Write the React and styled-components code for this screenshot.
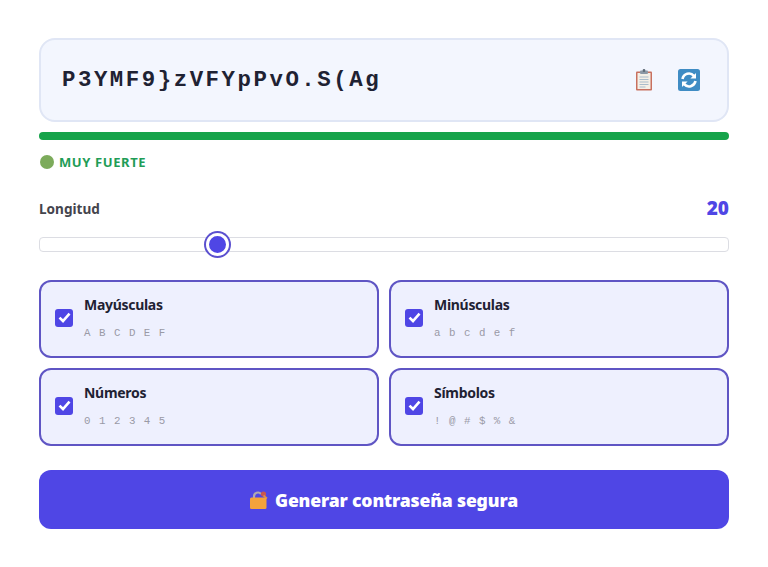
import React from "react"
import styled, { createGlobalStyle } from "styled-components"

const Global = createGlobalStyle`
  html, body { margin: 0; padding: 0; background: #fff; }
  * { box-sizing: border-box; }
  body { font-family: "Noto Sans", "Open Sans", sans-serif; }
`

const Page = styled.main`
  width: 768px;
  height: 567px;
  padding: 38px 39px 0;
  display: flex;
  flex-direction: column;
`

const PasswordBox = styled.div`
  height: 84px;
  background: #f3f6fe;
  border: 2px solid #e0e6f5;
  border-radius: 16px;
  padding: 0 27px 0 21px;
  display: flex;
  align-items: center;
  justify-content: space-between;
`

const PasswordText = styled.span`
  font-family: "Liberation Mono", monospace;
  font-size: 22.4px;
  font-weight: 700;
  letter-spacing: 2.52px;
  color: #1f2233;
`

const IconRow = styled.div`
  display: flex;
  align-items: center;
  gap: 24px;
`

const StrengthBar = styled.div`
  height: 8px;
  margin-top: 10px;
  border-radius: 4px;
  background: #16a34a;
`

const StrengthLabel = styled.div`
  display: flex;
  align-items: center;
  gap: 5px;
  margin: 13px 0 0 1px;
  height: 18px;
  font-size: 13px;
  font-weight: 700;
  letter-spacing: 0.6px;
  color: #1f9d57;
`

const Dot = styled.span`
  width: 14px;
  height: 14px;
  border-radius: 50%;
  background: #7cab5b;
`

const LengthRow = styled.div`
  display: flex;
  justify-content: space-between;
  align-items: center;
  margin-top: 25px;
  height: 24px;
`

const LengthLabel = styled.label`
  font-size: 13.6px;
  font-weight: 700;
  color: #44444c;
`

const LengthValue = styled.span`
  font-size: 19px;
  font-weight: 900;
  color: #4f46e5;
`

const Slider = styled.input`
  -webkit-appearance: none;
  appearance: none;
  display: block;
  width: 100%;
  height: 15px;
  margin: 17px 0 0;
  background: #fff;
  border: 1px solid #dcdde3;
  border-radius: 4px;
  outline: none;

  &::-webkit-slider-thumb {
    -webkit-appearance: none;
    width: 23px;
    height: 23px;
    border-radius: 50%;
    background: #4f46e5;
    border: 3px solid #fff;
    box-shadow: 0 0 0 2px #5b50cf;
  }
`

const OptionGrid = styled.div`
  display: grid;
  grid-template-columns: 1fr 1fr;
  gap: 10px;
  margin-top: 28px;
`

const OptionCard = styled.label`
  height: 78px;
  display: flex;
  align-items: center;
  gap: 11px;
  padding: 0 14px;
  background: #eef0fe;
  border: 2px solid #5f55c4;
  border-radius: 12px;
`

const Check = styled.span`
  width: 18px;
  height: 18px;
  flex: none;
  margin-top: -3px;
  border-radius: 3px;
  background: #4f46e5;
  display: flex;
  align-items: center;
  justify-content: center;
`

const OptionText = styled.div`
  display: flex;
  flex-direction: column;
  gap: 13px;
  margin-top: -4px;
`

const OptionTitle = styled.span`
  font-size: 14px;
  font-weight: 700;
  line-height: 19px;
  letter-spacing: -0.3px;
  color: #1f2233;
`

const OptionSample = styled.span`
  font-family: "Liberation Mono", monospace;
  font-size: 10.8px;
  line-height: 12px;
  letter-spacing: 1px;
  color: #9a9aa6;
`

const GenerateButton = styled.button`
  height: 59px;
  margin-top: 24px;
  border: none;
  border-radius: 12px;
  background: #4f46e5;
  color: #fff;
  font-family: inherit;
  font-size: 17.6px;
  font-weight: 900;
  letter-spacing: -0.16px;
  display: flex;
  align-items: center;
  justify-content: center;
  gap: 7px;
`

const ClipboardIcon = () => (
  <svg width="20" height="22" viewBox="0 0 20 22">
    <rect x="2" y="2.5" width="16" height="19" rx="1" fill="#c8705f" />
    <rect x="3.5" y="4" width="13" height="16" fill="#f4efe6" />
    <rect x="6" y="1.5" width="8" height="3.5" rx="1" fill="#8b98a5" />
    <rect x="8.7" y="0" width="2.6" height="3" rx="1.2" fill="#5f6b78" />
    <path d="M5.5 8h9M5.5 10.5h9M5.5 13h9M5.5 15.5h9M5.5 18h6" stroke="#a9bccb" strokeWidth="1" />
  </svg>
)

const RefreshIcon = () => (
  <svg width="22" height="22" viewBox="0 0 22 22">
    <rect width="22" height="22" rx="2.5" fill="#3f8cc4" />
    <path d="M4.5 10a6.6 6.6 0 0 1 11.4-3.2" fill="none" stroke="#fff" strokeWidth="2.6" />
    <path d="M18 4v5.6h-5.6z" fill="#fff" />
    <path d="M17.5 12a6.6 6.6 0 0 1-11.4 3.2" fill="none" stroke="#fff" strokeWidth="2.6" />
    <path d="M4 18v-5.6h5.6z" fill="#fff" />
  </svg>
)

const LockIcon = () => (
  <svg width="18" height="18" viewBox="0 0 18 18">
    <path d="M4 8V5.5a4 4 0 0 1 7-2.6" fill="none" stroke="#b0a9b0" strokeWidth="2.2" />
    <circle cx="13.5" cy="3" r="2.6" fill="#c9574f" />
    <path d="M13.5 4.5 17 7.5" stroke="#e08f4a" strokeWidth="1.8" />
    <rect x="0" y="6.5" width="16.5" height="11.5" rx="1.5" fill="#f4a33c" />
  </svg>
)

const Tick = () => (
  <svg width="13" height="11" viewBox="0 0 13 11">
    <path d="M1.5 5.6 5 9 11.5 1.6" fill="none" stroke="#fff" strokeWidth="2.6" />
  </svg>
)

const options = [
  { title: "Mayúsculas", sample: "A B C D E F" },
  { title: "Minúsculas", sample: "a b c d e f" },
  { title: "Números", sample: "0 1 2 3 4 5" },
  { title: "Símbolos", sample: "! @ # $ % &" },
]

export default function App() {
  return (
    <Page>
      <Global />
      <PasswordBox>
        <PasswordText>P3YMF9}zVFYpPvO.S(Ag</PasswordText>
        <IconRow>
          <ClipboardIcon />
          <RefreshIcon />
        </IconRow>
      </PasswordBox>
      <StrengthBar />
      <StrengthLabel>
        <Dot />
        MUY FUERTE
      </StrengthLabel>
      <LengthRow>
        <LengthLabel>Longitud</LengthLabel>
        <LengthValue>20</LengthValue>
      </LengthRow>
      <Slider type="range" min="8" max="56" defaultValue="20" />
      <OptionGrid>
        {options.map(o => (
          <OptionCard key={o.title}>
            <Check><Tick /></Check>
            <OptionText>
              <OptionTitle>{o.title}</OptionTitle>
              <OptionSample>{o.sample}</OptionSample>
            </OptionText>
          </OptionCard>
        ))}
      </OptionGrid>
      <GenerateButton>
        <LockIcon />
        Generar contraseña segura
      </GenerateButton>
    </Page>
  )
}
